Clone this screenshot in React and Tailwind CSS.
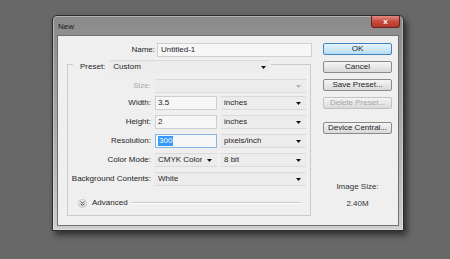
import React from 'react';

const Arrow = ({ gray }) => (
    <svg width="5" height="3" viewBox="0 0 5 3" className="shrink-0">
        <path d="M0 0h5L2.5 3z" fill={gray ? '#b0b0b0' : '#111'} />
    </svg>
);

const Field = ({ value, w, selected }) => (
    <div className={`h-[14px] ${w} flex items-center pl-[2px] border ${selected ? 'border-[#86b6e4]' : 'border-[#cfcfcf]'} bg-[#f6f6f6]`}>
        {selected ? (
            <span className="bg-[#3399ff] text-white leading-[10px] px-[1px]">{value}</span>
        ) : (
            <span className="leading-[10px]">{value}</span>
        )}
    </div>
);

const Select = ({ value, w, gray }) => (
    <div className={`h-[14px] ${w} flex items-center justify-between pl-[3px] pr-[5px] border-t border-b border-[#dadada] bg-[#ececec]`}>
        <span className="leading-[10px] truncate">{value}</span>
        <Arrow gray={gray} />
    </div>
);

const Row = ({ label, gray, children, className = '' }) => (
    <div className={`flex items-center h-[14px] ${className}`}>
        <div className={`w-[84px] text-right pr-[1px] ${gray ? 'text-[#a9a9a9]' : ''}`}>{label}</div>
        <div className="ml-[3px] flex gap-[4px]">{children}</div>
    </div>
);

const Button = ({ label, primary, disabled, className = '' }) => (
    <div
        className={`h-[12px] w-[69px] flex items-center justify-center rounded-[2px] border leading-[10px] ${
            primary
                ? 'border-[#3c84c0] bg-gradient-to-b from-[#e6f4fc] to-[#b8dcf2]'
                : 'border-[#8a8a8a] bg-gradient-to-b from-[#f5f5f5] to-[#d9d9d9]'
        } ${disabled ? 'text-[#a6a6a6] border-[#c2c2c2]' : ''} ${className}`}
    >
        {label}
    </div>
);

export default function App() {
    return (
        <div className="w-[450px] h-[259px] bg-[#686868] pl-[52px] pt-[15px] font-['Liberation_Sans',Arial,sans-serif] text-[8px] text-[#1e1e1e]">
            <div className="w-[352px] h-[216px] flex flex-col rounded-t-[5px] border border-[#2c2c2c] bg-gradient-to-b from-[#8a8a8a] via-[#a9a9a9] to-[#cfcfcf] shadow-[inset_0_0_0_1px_rgba(255,255,255,0.35),3px_4px_6px_rgba(0,0,0,0.55)]">
                {/* barra de titulo */}
                <div className="h-[19px] flex items-start justify-between pl-[5px]">
                    <span className="mt-[6px] leading-[10px] text-[#1a1a1a]">New</span>
                    <div className="mr-[3px] w-[29px] h-[12px] flex items-center justify-center rounded-b-[3px] border border-t-0 border-[#6b2020] bg-gradient-to-b from-[#e08a80] via-[#c74a3e] to-[#b2362b] text-white font-bold text-[8px] leading-[8px]">
                        x
                    </div>
                </div>

                <div className="mx-[4px] mb-[4px] flex-1 flex border border-[#707070] bg-[#efefef] pl-[9px] pt-[7px]">
                    {/* columna izquierda */}
                    <div className="w-[246px] flex flex-col">
                        <div className="flex items-center h-[14px]">
                            <div className="w-[88px] text-right">Name:</div>
                            <div className="ml-[2px] w-[155px] h-[14px] flex items-center pl-[3px] border border-[#cfcfcf] bg-[#f6f6f6] leading-[10px]">
                                Untitled-1
                            </div>
                        </div>

                        <div className="w-[244px] mt-[3px] flex h-[13px]">
                            <div className="w-[6px] mt-[4px] border-t border-l border-[#cbcbcb]"></div>
                            <span className="ml-[7px] leading-[13px]">Preset:</span>
                            <div className="ml-[4px] w-[160px] h-[13px] flex items-center justify-between pl-[4px] pr-[3px] border-t border-[#dadada] bg-[#ececec]">
                                <span className="leading-[10px]">Custom</span>
                                <Arrow />
                            </div>
                            <div className="flex-1 ml-[2px] mt-[4px] border-t border-r border-[#cbcbcb]"></div>
                        </div>

                        <div className="w-[244px] h-[143px] border-l border-r border-b border-[#cbcbcb] pt-[6px] flex flex-col">
                            <Row label="Size:" gray>
                                <Select value="" w="w-[151px]" gray />
                            </Row>
                            <Row label="Width:" className="mt-[3px]">
                                <Field value="3.5" w="w-[62px]" />
                                <Select value="inches" w="w-[85px]" />
                            </Row>
                            <Row label="Height:" className="mt-[5px]">
                                <Field value="2" w="w-[62px]" />
                                <Select value="inches" w="w-[85px]" />
                            </Row>
                            <Row label="Resolution:" className="mt-[5px]">
                                <Field value="300" w="w-[62px]" selected />
                                <Select value="pixels/inch" w="w-[85px]" />
                            </Row>
                            <Row label="Color Mode:" className="mt-[5px]">
                                <Select value="CMYK Color" w="w-[62px]" />
                                <Select value="8 bit" w="w-[85px]" />
                            </Row>
                            <Row label="Background Contents:" className="mt-[5px]">
                                <Select value="White" w="w-[151px]" />
                            </Row>

                            <div className="mt-[11px] h-[12px] flex items-center">
                                <div className="ml-[10px] w-[9px] h-[9px] rounded-full border border-[#c4c4c4] bg-gradient-to-b from-[#fafafa] to-[#dedede] flex items-center justify-center">
                                    <svg width="5" height="5" viewBox="0 0 5 5">
                                        <path d="M0.5 0.5L2.5 2L4.5 0.5M0.5 2.8L2.5 4.3L4.5 2.8" fill="none" stroke="#333" strokeWidth="0.9" />
                                    </svg>
                                </div>
                                <span className="ml-[5px] leading-[10px]">Advanced</span>
                                <div className="flex-1 ml-[3px] mr-[9px] h-[2px] border-t border-b border-t-[#c9c9c9] border-b-white"></div>
                            </div>
                        </div>
                    </div>

                    {/* columna derecha */}
                    <div className="ml-[10px] flex flex-col">
                        <div className="flex flex-col gap-[6px]">
                            <Button label="OK" primary />
                            <Button label="Cancel" />
                            <Button label="Save Preset..." />
                            <Button label="Delete Preset..." disabled />
                        </div>
                        <Button label="Device Central..." className="mt-[13px]" />
                        <div className="mt-[48px] text-center leading-[10px] text-[#333]">Image Size:</div>
                        <div className="mt-[7px] text-center leading-[10px] text-[#333]">2.40M</div>
                    </div>
                </div>
            </div>
        </div>
    );
}
